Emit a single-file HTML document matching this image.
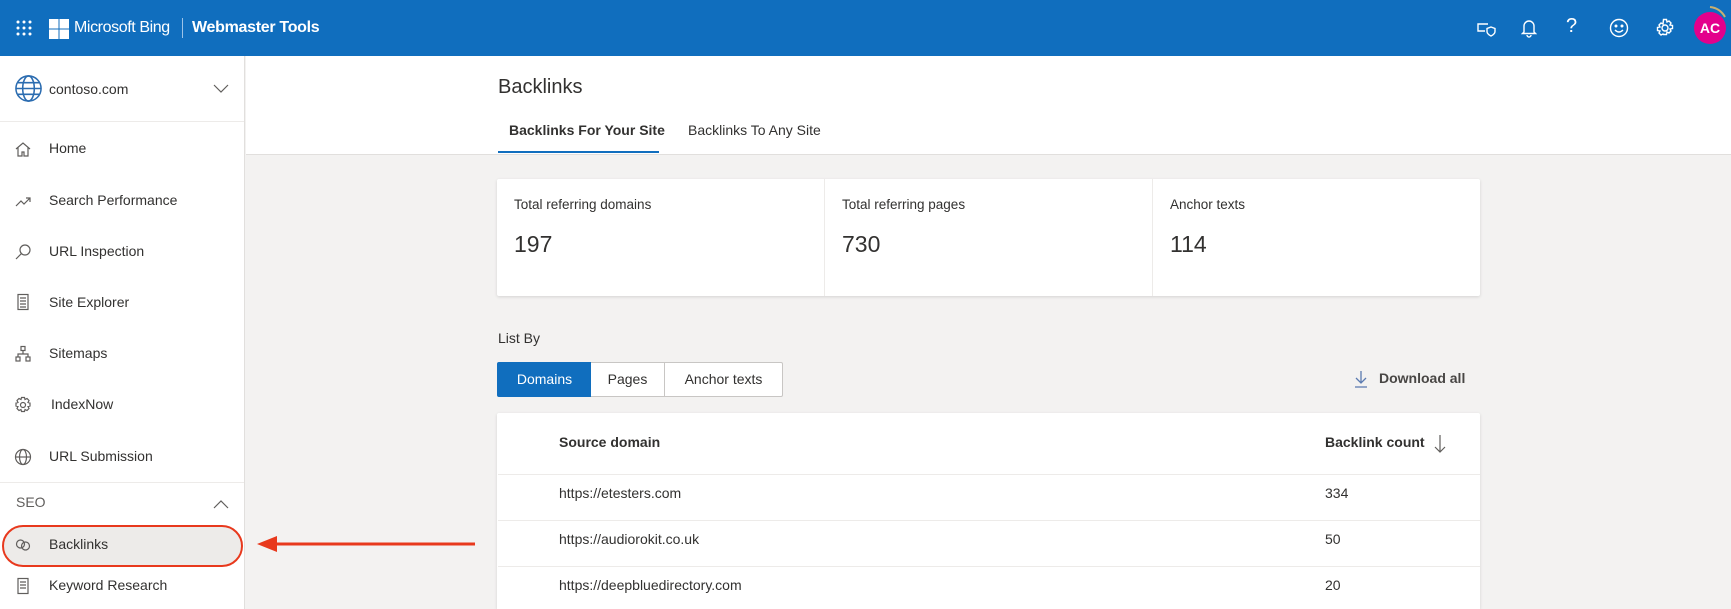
<!DOCTYPE html>
<html style="overflow:hidden;width:1731px;height:609px"><head><meta charset="utf-8"><style>
*{box-sizing:border-box;margin:0;padding:0}
body{width:1731px;height:609px;overflow:hidden;background:#f3f2f1;font-family:"Segoe UI","Liberation Sans",sans-serif;color:#323130;position:relative}
.abs{position:absolute}
.hdr{left:0;top:0;width:1731px;height:56px;background:#106ebe;color:#fff}
.side{left:0;top:56px;width:245px;height:553px;background:#fff;border-right:1px solid #e1dfdd}
.nav{position:absolute;left:49px;font-size:14px;color:#323130;white-space:nowrap}
.ico{position:absolute;left:14px;width:18px;height:18px}
.top{left:246px;top:56px;width:1485px;height:99px;background:#fff;border-bottom:1px solid #e1dfdd}
.card{background:#fff;box-shadow:0 1px 3px rgba(0,0,0,.13);border-radius:2px}
.lbl{font-size:13.5px;color:#323130;position:absolute}
.num{font-size:23px;color:#323130;position:absolute}
.btn{position:absolute;top:362px;height:35px;border:1px solid #c8c6c4;background:#fff;font-size:14px;text-align:center;line-height:33px;color:#323130}
.row{position:absolute;left:498px;width:982px;border-top:1px solid #edebe9}
.td{position:absolute;font-size:14px;color:#323130}
</style></head><body>
<div class="abs hdr">
 <svg class="abs" style="left:16px;top:20px" width="16" height="16" viewBox="0 0 16 16" fill="#fff"><circle cx="2" cy="2" r="1.5"/><circle cx="8" cy="2" r="1.5"/><circle cx="14" cy="2" r="1.5"/><circle cx="2" cy="8" r="1.5"/><circle cx="8" cy="8" r="1.5"/><circle cx="14" cy="8" r="1.5"/><circle cx="2" cy="14" r="1.5"/><circle cx="8" cy="14" r="1.5"/><circle cx="14" cy="14" r="1.5"/></svg>
 <svg class="abs" style="left:49px;top:19px" width="20" height="20" viewBox="0 0 20 20" fill="#fff"><rect x="0" y="0" width="9.5" height="9.5"/><rect x="10.5" y="0" width="9.5" height="9.5"/><rect x="0" y="10.5" width="9.5" height="9.5"/><rect x="10.5" y="10.5" width="9.5" height="9.5"/></svg>
 <div class="abs" style="left:74px;top:19px;font-size:16px;letter-spacing:-0.4px">Microsoft Bing</div>
 <div class="abs" style="left:182px;top:18px;width:1px;height:20px;background:#9cc3e8"></div>
 <div class="abs" style="left:192px;top:19px;font-size:16px;font-weight:bold;letter-spacing:-0.3px">Webmaster Tools</div>
 <svg class="abs" style="left:1476px;top:19px" width="20" height="18" viewBox="0 0 20 18" fill="none" stroke="#fff" stroke-width="1.4"><path d="M12 5H2V12h7"/><path d="M15 8l4 1.5v3c0 2-2 3.5-4 4.5-2-1-4-2.5-4-4.5v-3z"/></svg>
 <svg class="abs" style="left:1521px;top:18px" width="16" height="20" viewBox="0 0 16 20" fill="none" stroke="#fff" stroke-width="1.4"><path d="M3 14V8a5 5 0 0 1 10 0v6l1.5 1.5h-13z"/><path d="M6 17a2 2 0 0 0 4 0"/></svg>
 <div class="abs" style="left:1566px;top:15px;font-size:20px">?</div>
 <svg class="abs" style="left:1609px;top:18px" width="20" height="20" viewBox="0 0 20 20" fill="none" stroke="#fff" stroke-width="1.4"><circle cx="10" cy="10" r="8.5"/><circle cx="7" cy="8" r=".8" fill="#fff"/><circle cx="13" cy="8" r=".8" fill="#fff"/><path d="M6 12q4 4 8 0"/></svg>
 <svg class="abs" style="left:1655px;top:18px" width="20" height="20" viewBox="0 0 20 20" fill="none" stroke="#fff" stroke-width="1.4"><path d="M8.5 1.5h3l.5 2.5 2-1 2 2-1 2 2.5.5v3l-2.5.5 1 2-2 2-2-1-.5 2.5h-3L8 16l-2 1-2-2 1-2-2.5-.5v-3L5 9 4 7l2-2 2 1z"/><circle cx="10" cy="10" r="3"/></svg>
 <div class="abs" style="left:1694px;top:12px;width:32px;height:32px;border-radius:50%;background:#e3008c;color:#fff;font-size:14px;font-weight:bold;text-align:center;line-height:32px">AC</div>
 <svg class="abs" style="left:1708px;top:5px" width="20" height="14"><path d="M2 2q10 1 15 10" stroke="#c8b070" stroke-width="2" fill="none"/></svg>
</div>
<div class="abs side">
 <svg class="abs" style="left:14px;top:18px" width="29" height="29" viewBox="0 0 30 30" fill="none" stroke="#2b6cb0" stroke-width="1.6"><circle cx="15" cy="15" r="13"/><ellipse cx="15" cy="15" rx="6" ry="13"/><path d="M2 15h26M4 9h22M4 21h22"/></svg>
 <div class="nav" style="top:25px">contoso.com</div>
 <svg class="abs" style="left:213px;top:28px" width="16" height="10"><path d="M1 1l7 7 7-7" stroke="#605e5c" fill="none" stroke-width="1.2"/></svg>
 <div class="abs" style="left:0;top:65px;width:244px;height:1px;background:#edebe9"></div>
 <svg class="ico" style="top:84px" viewBox="0 0 18 18" fill="none" stroke="#605e5c" stroke-width="1.2"><path d="M2 9l7-6 7 6M4 7.5V16h4v-4h2v4h4V7.5"/></svg><div class="nav" style="top:84px">Home</div>
 <svg class="ico" style="top:136px" viewBox="0 0 18 18" fill="none" stroke="#605e5c" stroke-width="1.2"><path d="M2 14l5-5 3 3 6-6M12 6h4v4"/></svg><div class="nav" style="top:136px">Search Performance</div>
 <svg class="ico" style="top:187px" viewBox="0 0 18 18" fill="none" stroke="#605e5c" stroke-width="1.2"><circle cx="11" cy="7" r="5"/><path d="M7.5 10.5L2 16"/></svg><div class="nav" style="top:187px">URL Inspection</div>
 <svg class="ico" style="top:237px" viewBox="0 0 18 18" fill="none" stroke="#605e5c" stroke-width="1.2"><rect x="4" y="1.5" width="10" height="15"/><path d="M6 5h6M6 8h6M6 11h6M6 14h6"/></svg><div class="nav" style="top:238px">Site Explorer</div>
 <svg class="ico" style="top:289px" viewBox="0 0 18 18" fill="none" stroke="#605e5c" stroke-width="1.2"><rect x="7" y="1.5" width="4" height="4"/><rect x="2" y="12" width="4" height="4"/><rect x="12" y="12" width="4" height="4"/><path d="M9 5.5V9M4 12V9h10v3"/></svg><div class="nav" style="top:289px">Sitemaps</div>
 <svg class="ico" style="top:340px" viewBox="0 0 18 18" fill="none" stroke="#605e5c" stroke-width="1.2"><path d="M7.5 1.5h3l.5 2 2-1 2 2-1 2 2 .5v3l-2 .5 1 2-2 2-2-1-.5 2h-3l-.5-2-2 1-2-2 1-2-2-.5v-3l2-.5-1-2 2-2 2 1z"/><circle cx="9" cy="9" r="2.5"/></svg><div class="nav" style="top:340px;left:51px">IndexNow</div>
 <svg class="ico" style="top:392px" viewBox="0 0 18 18" fill="none" stroke="#605e5c" stroke-width="1.2"><circle cx="9" cy="9" r="7.5"/><ellipse cx="9" cy="9" rx="3.5" ry="7.5"/><path d="M1.5 9h15"/></svg><div class="nav" style="top:392px">URL Submission</div>
 <div class="abs" style="left:0;top:426px;width:244px;height:1px;background:#edebe9"></div>
 <div class="nav" style="top:438px;left:16px;color:#605e5c">SEO</div>
 <svg class="abs" style="left:213px;top:443px" width="16" height="10"><path d="M1 9l7-7 7 7" stroke="#605e5c" fill="none" stroke-width="1.2"/></svg>
 <div class="abs" style="left:2px;top:469px;width:241px;height:42px;background:#edebe9;border:2.5px solid #e8391d;border-radius:21px"></div>
 <svg class="ico" style="top:480px" viewBox="0 0 18 18" fill="none" stroke="#605e5c" stroke-width="1.2"><circle cx="6.5" cy="8" r="4"/><circle cx="11.5" cy="10" r="4"/></svg><div class="nav" style="top:480px">Backlinks</div>
 <svg class="ico" style="top:521px" viewBox="0 0 18 18" fill="none" stroke="#605e5c" stroke-width="1.2"><rect x="4" y="1.5" width="10" height="15"/><path d="M6 5h6M6 8h6M6 11h6"/></svg><div class="nav" style="top:521px">Keyword Research</div>
</div>
<svg class="abs" style="left:255px;top:534px" width="222" height="20"><path d="M20 10H220" stroke="#e8391d" stroke-width="3"/><path d="M2 10L22 2V18z" fill="#e8391d"/></svg>
<div class="abs top"></div>
<div class="abs" style="left:498px;top:76px;font-size:20px">Backlinks</div>
<div class="abs" style="left:509px;top:122px;font-size:14px;font-weight:bold">Backlinks For Your Site</div>
<div class="abs" style="left:688px;top:122px;font-size:14px">Backlinks To Any Site</div>
<div class="abs" style="left:498px;top:151px;width:161px;height:2px;background:#106ebe"></div>
<div class="abs card" style="left:497px;top:179px;width:983px;height:117px">
 <div class="abs" style="left:327px;top:0;width:1px;height:117px;background:#edebe9"></div>
 <div class="abs" style="left:655px;top:0;width:1px;height:117px;background:#edebe9"></div>
 <div class="lbl" style="left:17px;top:18px">Total referring domains</div><div class="num" style="left:17px;top:52px">197</div>
 <div class="lbl" style="left:345px;top:18px">Total referring pages</div><div class="num" style="left:345px;top:52px">730</div>
 <div class="lbl" style="left:673px;top:18px">Anchor texts</div><div class="num" style="left:673px;top:52px">114</div>
</div>
<div class="abs" style="left:498px;top:330px;font-size:14px">List By</div>
<div class="btn" style="left:497px;width:95px;background:#106ebe;border-color:#106ebe;color:#fff;border-radius:2px 0 0 2px">Domains</div>
<div class="btn" style="left:591px;width:74px;border-left:none">Pages</div>
<div class="btn" style="left:664px;width:119px;border-radius:0 2px 2px 0">Anchor texts</div>
<svg class="abs" style="left:1354px;top:370px" width="14" height="18" viewBox="0 0 14 18" fill="none" stroke="#5a7ab0" stroke-width="1.3"><path d="M7 1v12M2 8l5 5 5-5M1 17h12"/></svg>
<div class="abs" style="left:1379px;top:370px;font-size:14px;font-weight:bold;color:#484644">Download all</div>
<div class="abs card" style="left:497px;top:413px;width:983px;height:196px;border-radius:2px 2px 0 0"></div>
<div class="td" style="left:559px;top:434px;font-weight:bold">Source domain</div>
<div class="td" style="left:1325px;top:434px;font-weight:bold">Backlink count</div>
<svg class="abs" style="left:1434px;top:434px" width="12" height="20"><path d="M6 1v17M1 13l5 5 5-5" stroke="#605e5c" fill="none" stroke-width="1.2"/></svg>
<div class="row" style="top:474px"></div>
<div class="td" style="left:559px;top:485px">https://etesters.com</div><div class="td" style="left:1325px;top:485px">334</div>
<div class="row" style="top:520px"></div>
<div class="td" style="left:559px;top:531px">https://audiorokit.co.uk</div><div class="td" style="left:1325px;top:531px">50</div>
<div class="row" style="top:566px"></div>
<div class="td" style="left:559px;top:577px">https://deepbluedirectory.com</div><div class="td" style="left:1325px;top:577px">20</div>
</body></html>
